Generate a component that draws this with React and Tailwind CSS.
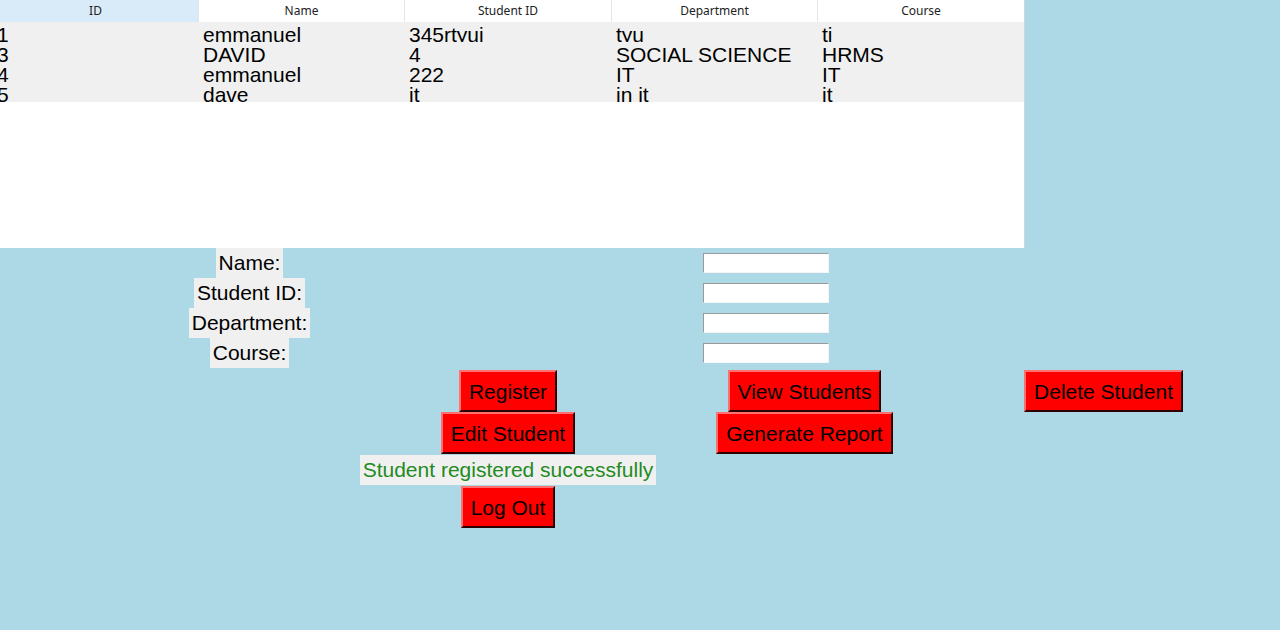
import React from "react";

const columns = [
  { name: "ID", width: "w-[206px]" },
  { name: "Name", width: "w-[206px]" },
  { name: "Student ID", width: "w-[207px]" },
  { name: "Department", width: "w-[206px]" },
  { name: "Course", width: "w-[207px]" },
];

const rows = [
  ["1", "emmanuel", "345rtyui", "tyu", "ti"],
  ["3", "DAVID", "4", "SOCIAL SCIENCE", "HRMS"],
  ["4", "emmanuel", "222", "IT", "IT"],
  ["5", "dave", "it", "in it", "it"],
];

const fields = ["Name:", "Student ID:", "Department:", "Course:"];

const style = {
  btn: "h-[42px] px-[8px] bg-[#ff0000] text-black text-[21px] leading-none border-2 border-t-[#ff7070] border-l-[#ff7070] border-b-[#2a0000] border-r-[#2a0000] whitespace-nowrap",
  label: "h-[30px] px-[3px] bg-[#f0f0f0] text-[21px] leading-[30px] whitespace-nowrap",
};

const Button = ({ children }) => <button className={style.btn}>{children}</button>;

const StudentTable = () => (
  <div className="w-[1025px] h-[248px] bg-white overflow-hidden border-r border-[#c9d6df]">
    <div className="-ml-[7px]">
      <div className="flex h-[22px] font-['Noto_Sans',sans-serif] text-[12px] text-[#222]">
        {columns.map((col, i) => (
          <div
            key={col.name}
            className={`${col.width} shrink-0 flex items-center justify-center border-r border-[#e5e5e5] ${
              i === 0 ? "bg-[#d9ebf9]" : "bg-white"
            }`}
          >
            {col.name}
          </div>
        ))}
      </div>
      <div className="bg-[#f0f0f0] w-[1031px]">
        {rows.map((row) => (
          <div key={row[0]} className="flex h-[20px]">
            {row.map((cell, i) => (
              <div
                key={i}
                className={`${columns[i].width} shrink-0 h-[20px] overflow-hidden pl-[4px] text-[21px] leading-[26px] text-black whitespace-nowrap`}
              >
                {cell}
              </div>
            ))}
          </div>
        ))}
      </div>
    </div>
  </div>
);

export default function App() {
  return (
    <div className="w-[1280px] h-[630px] bg-[#add8e6] font-['Liberation_Sans',Arial,sans-serif] overflow-hidden">
      <StudentTable />

      <div className="flex flex-col">
        {fields.map((f) => (
          <div key={f} className="flex h-[30px]">
            <div className="w-[499px] flex justify-center">
              <span className={`${style.label} text-black`}>{f}</span>
            </div>
            <div className="ml-[204px] pt-[5px]">
              <input
                type="text"
                className="block w-[126px] h-[20px] bg-white outline-none border border-t-[#9a9a9a] border-l-[#9a9a9a] border-b-[#f5f5f5] border-r-[#f5f5f5]"
              />
            </div>
          </div>
        ))}
      </div>

      <div className="flex flex-col mt-[2px] pl-[358px]">
        <div className="flex h-[42px]">
          <div className="w-[300px] flex justify-center">
            <Button>Register</Button>
          </div>
          <div className="w-[293px] flex justify-center">
            <Button>View Students</Button>
          </div>
          <div className="w-[305px] flex justify-center">
            <Button>Delete Student</Button>
          </div>
        </div>
        <div className="flex h-[42px]">
          <div className="w-[300px] flex justify-center">
            <Button>Edit Student</Button>
          </div>
          <div className="w-[293px] flex justify-center">
            <Button>Generate Report</Button>
          </div>
        </div>
        <div className="flex h-[32px] items-center">
          <div className="w-[300px] flex justify-center">
            <span className={`${style.label} text-[#228b22]`}>Student registered successfully</span>
          </div>
        </div>
        <div className="flex h-[42px]">
          <div className="w-[300px] flex justify-center">
            <Button>Log Out</Button>
          </div>
        </div>
      </div>
    </div>
  );
}
